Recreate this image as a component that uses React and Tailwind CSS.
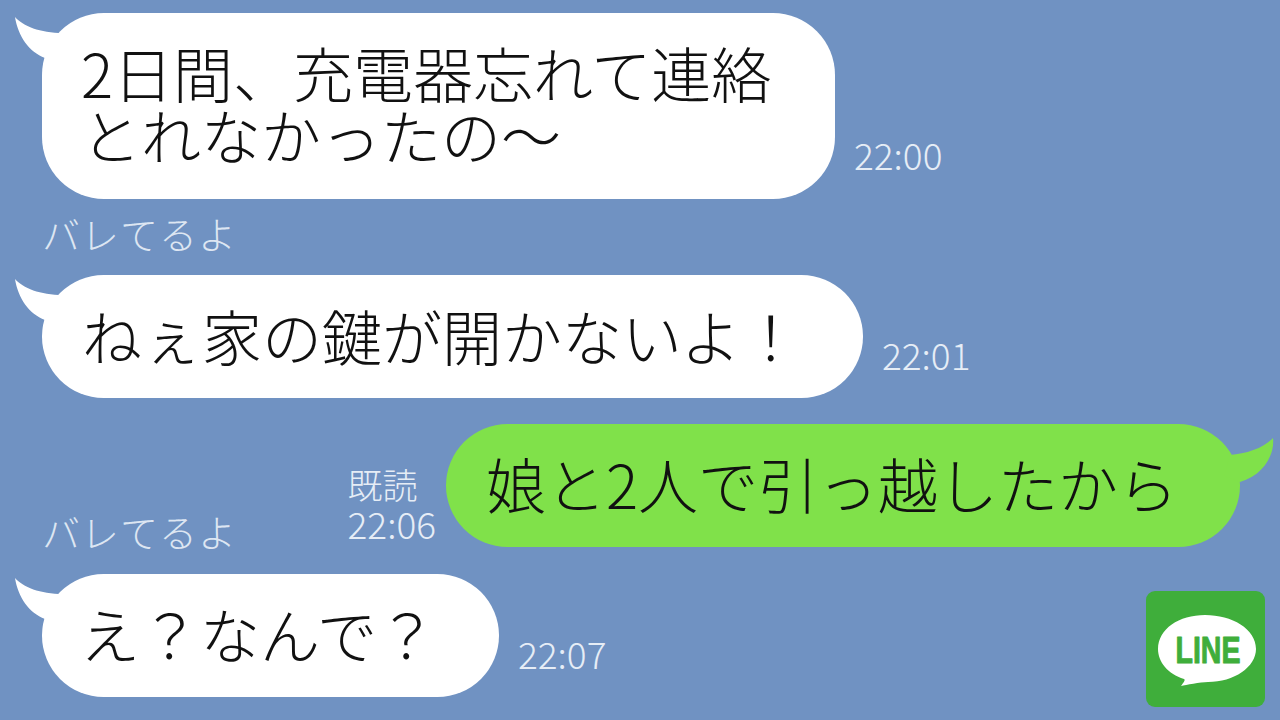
const jp = "font-['Noto_Sans_CJK_JP','Noto_Sans',sans-serif]";

function Tail({ flip, color }) {
  return (
    <svg
      className={flip ? 'absolute right-[-34px] top-[12px] w-[50px] h-[50px]' : 'absolute left-[-27px] top-[3px] w-[60px] h-[50px]'}
      viewBox={flip ? '0 0 50 50' : '0 0 60 50'}
      fill={color}
    >
      {flip ? (
        <path d="M6 19 C22 18 40 12 49 2 C51 20 38 40 16 46 L0 40 Z" />
      ) : (
        <path d="M0 1 C8 10 25 17 48 17 L50 46 L30 42 C14 36 3 20 0 1 Z" />
      )}
    </svg>
  );
}

function Bubble({ children, className }) {
  return (
    <div className={`relative bg-white rounded-[62px] text-[60px] leading-[62px] text-[#111] font-light whitespace-nowrap ${className}`}>
      <Tail color="#ffffff" />
      <div className="relative">{children}</div>
    </div>
  );
}

function Time({ children }) {
  return <span className="text-[37px] leading-[40px] text-[#e6edf6] font-light">{children}</span>;
}

function Label({ children }) {
  return <div className="text-[38px] leading-[44px] tracking-[1px] text-[#dde6f2] font-light">{children}</div>;
}

function LineLogo() {
  return (
    <div className="absolute left-[1146px] top-[591px] w-[119px] h-[116px] bg-[#3fae3b] rounded-[9px] flex items-center justify-center">
      <svg viewBox="0 0 119 116" className="w-[119px] h-[116px]">
        <path
          d="M59 24 C86 24 110 38 110 58 C110 76 88 91 62 91 C54 91 40 94 35 95 C37 92 40 89 38 88 C22 83 12 71 12 58 C12 38 33 24 59 24 Z"
          fill="#ffffff"
        />
        <text
          x="62"
          y="72"
          textAnchor="middle"
          fontFamily="'Liberation Sans', sans-serif"
          fontWeight="700"
          fontSize="37"
          textLength="65"
          lengthAdjust="spacingAndGlyphs"
          fill="#3fae3b"
          stroke="#3fae3b"
          strokeWidth="1"
          strokeLinejoin="round"
        >
          LINE
        </text>
      </svg>
    </div>
  );
}

export default function App() {
  return (
    <div className={`relative w-[1280px] h-[720px] overflow-hidden bg-[#7092c2] pl-[42px] pr-[42px] pt-[13px] ${jp}`}>
      {/* first message */}
      <div className="flex items-end gap-[19px]">
        <Bubble className="w-[793px] h-[186px] pl-[39px] pt-[28px]">
          2日間、充電器忘れて連絡
          <br />
          とれなかったの～
        </Bubble>
        <div className="pb-[24px]">
          <Time>22:00</Time>
        </div>
      </div>

      <div className="mt-[12px]">
        <Label>バレてるよ</Label>
      </div>

      {/* second message */}
      <div className="mt-[20px] flex items-end gap-[19px]">
        <Bubble className="w-[821px] h-[123px] pl-[40px] pt-[29px]">ねぇ家の鍵が開かないよ！</Bubble>
        <div className="pb-[23px]">
          <Time>22:01</Time>
        </div>
      </div>

      {/* my reply with read mark */}
      <div className="mt-[26px] flex items-end justify-between">
        <div className="mb-[-6px]">
          <Label>バレてるよ</Label>
        </div>
        <div className="flex items-end gap-[10px] mr-[-2px]">
          <div className="flex flex-col pb-[4px]">
            <span className="text-[35px] leading-[38px] text-[#e6edf6] font-light">既読</span>
            <Time>22:06</Time>
          </div>
          <div className="relative w-[794px] h-[123px] pl-[40px] pt-[28px] bg-[#80e14a] rounded-[62px] text-[60px] leading-[62px] text-[#111] font-light whitespace-nowrap">
            <Tail flip color="#80e14a" />
            <div className="relative">娘と2人で引っ越したから</div>
          </div>
        </div>
      </div>

      {/* last message */}
      <div className="mt-[27px] flex items-end gap-[19px]">
        <Bubble className="w-[457px] h-[123px] pl-[38px] pt-[28px]">え？なんで？</Bubble>
        <div className="pb-[23px]">
          <Time>22:07</Time>
        </div>
      </div>

      <LineLogo />
    </div>
  );
}
